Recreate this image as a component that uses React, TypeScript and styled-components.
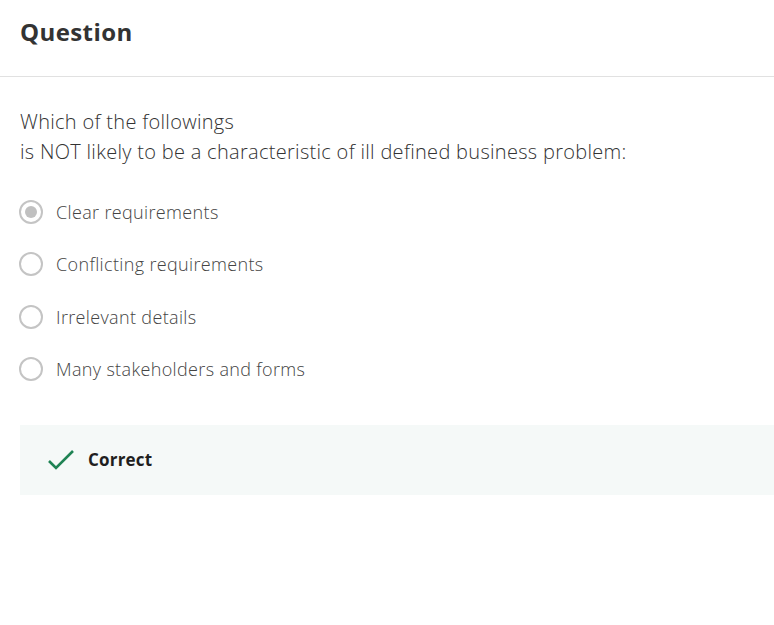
import React from 'react'
import styled, { createGlobalStyle } from 'styled-components'

const GlobalStyle = createGlobalStyle`
  html, body {
    margin: 0;
    padding: 0;
    background: #fff;
    font-family: "Open Sans", "Noto Sans", sans-serif;
    overflow: hidden;
  }
`

const options = [
  'Clear requirements',
  'Conflicting requirements',
  'Irrelevant details',
  'Many stakeholders and forms',
]

const Page = styled.div`
  width: 774px;
`

const Header = styled.div`
  height: 77px;
  padding-left: 20px;
  display: flex;
  align-items: center;
  border-bottom: 1px solid #e1e1e1;
  box-sizing: border-box;
  padding-bottom: 14px;
`

const Title = styled.h2`
  margin: 0;
  font-size: 24px;
  font-weight: 700;
  letter-spacing: 0.4px;
  color: #333;
`

const Body = styled.div`
  padding: 30px 0 0 20px;
`

const Prompt = styled.p`
  margin: 0 0 30px;
  font-size: 20px;
  font-weight: 300;
  letter-spacing: 0.3px;
  line-height: 30px;
  color: #333;
`

const OptionList = styled.div`
  display: flex;
  flex-direction: column;
  gap: 22.3px;
`

const Option = styled.label`
  display: flex;
  align-items: center;
  gap: 13px;
  height: 30px;
  font-size: 18px;
  font-weight: 300;
  letter-spacing: 0.35px;
  color: #444;
`

const Radio = styled.span<{ $checked?: boolean }>`
  width: 20px;
  height: 20px;
  margin-left: -1px;
  border-radius: 50%;
  border: 2px solid #c4c4c4;
  display: flex;
  align-items: center;
  justify-content: center;
  flex-shrink: 0;

  &::after {
    content: '';
    width: 12px;
    height: 12px;
    border-radius: 50%;
    background: ${p => (p.$checked ? '#c0c0c0' : 'transparent')};
  }
`

const Feedback = styled.div`
  margin-top: 41px;
  height: 70px;
  background: #f5f9f8;
  display: flex;
  align-items: center;
  padding-left: 27px;
  gap: 13px;
`

const FeedbackText = styled.span`
  font-size: 17px;
  font-weight: 700;
  letter-spacing: 0.2px;
  color: #1f1f1f;
`

const CheckIcon = () => (
  <svg width="28" height="24" viewBox="0 0 28 24" fill="none">
    <path d="M2 13l7 7L26 3" stroke="#1f8354" strokeWidth="2.6" />
  </svg>
)

export default function App() {
  return (
    <Page>
      <GlobalStyle />
      <Header>
        <Title>Question</Title>
      </Header>
      <Body>
        <Prompt>
          Which of the followings
          <br />
          is NOT likely to be a characteristic of ill defined business problem:
        </Prompt>
        <OptionList>
          {options.map((o, i) => (
            <Option key={o}>
              <Radio $checked={i === 0} />
              {o}
            </Option>
          ))}
        </OptionList>
        <Feedback>
          <CheckIcon />
          <FeedbackText>Correct</FeedbackText>
        </Feedback>
      </Body>
    </Page>
  )
}
